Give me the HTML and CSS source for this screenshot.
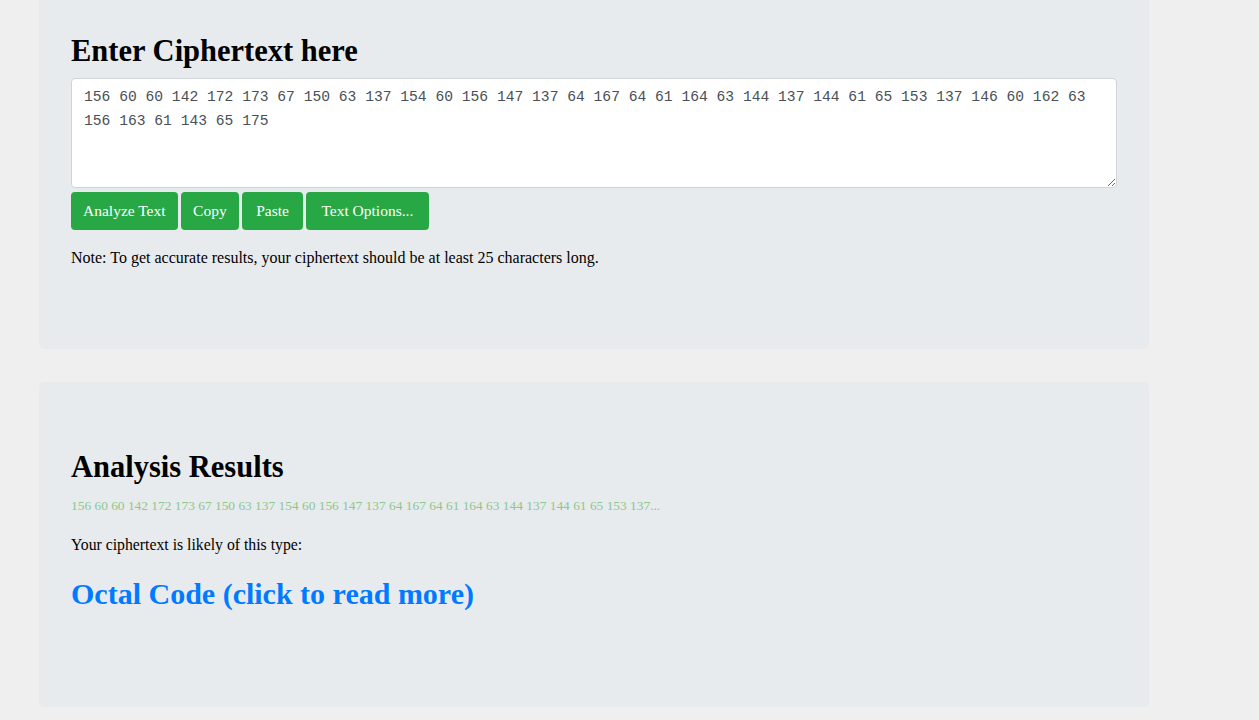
FILE: index.html
```html
<!DOCTYPE html>
<html lang="en">
<head>
<meta charset="utf-8">
<title>Cipher Identifier</title>
<link rel="stylesheet" href="styles.css">
</head>
<body>
<main class="page">
  <section class="card card-input">
    <h2 class="card-title">Enter Ciphertext here</h2>
    <textarea class="cipher-input" spellcheck="false">156 60 60 142 172 173 67 150 63 137 154 60 156 147 137 64 167 64 61 164 63 144 137 144 61 65 153 137 146 60 162 63 156 163 61 143 65 175</textarea>
    <div class="btn-row">
      <button class="btn">Analyze Text</button>
      <button class="btn">Copy</button>
      <button class="btn">Paste</button>
      <button class="btn">Text Options...</button>
    </div>
    <p class="note">Note: To get accurate results, your ciphertext should be at least 25 characters long.</p>
  </section>
  <section class="card card-results">
    <h2 class="card-title">Analysis Results</h2>
    <p class="preview">156 60 60 142 172 173 67 150 63 137 154 60 156 147 137 64 167 64 61 164 63 144 137 144 61 65 153 137...</p>
    <p class="likely">Your ciphertext is likely of this type:</p>
    <a class="result-link" href="#">Octal Code (click to read more)</a>
  </section>
</main>
</body>
</html>
```

FILE: styles.css
```css
html, body {
  margin: 0;
  padding: 0;
  background: #efefef;
}
body {
  font-family: "Liberation Serif", "DejaVu Serif", serif;
  color: #000;
}
.page {
  width: 1110px;
  margin-left: 39px;
  display: flex;
  flex-direction: column;
  gap: 33px;
}
.card {
  background: #e8ebee;
  padding: 0 32px;
  display: flex;
  flex-direction: column;
  align-items: flex-start;
}
.card-input {
  border-radius: 0 0 5px 5px;
  padding-top: 32px;
  height: 349px;
  box-sizing: border-box;
}
.card-results {
  border-radius: 5px;
  padding-top: 66px;
  height: 325px;
  box-sizing: border-box;
}
.card-title {
  margin: 0;
  font-size: 30.5px;
  font-weight: bold;
  line-height: 38px;
}
.cipher-input {
  margin-top: 8px;
  width: 1046px;
  height: 110px;
  box-sizing: border-box;
  border: 1px solid #ced4da;
  border-radius: 4px;
  background: #fff;
  padding: 6px 12px;
  font-family: "Liberation Mono", "DejaVu Sans Mono", monospace;
  font-size: 14.65px;
  line-height: 24px;
  color: #495057;
  resize: vertical;
}
.btn-row {
  display: flex;
  gap: 3px;
  margin-top: 4px;
}
.btn {
  background: #28a745;
  color: #fff;
  border: none;
  border-radius: 4px;
  height: 38px;
  padding: 0 12px;
  font-family: "Liberation Serif", "DejaVu Serif", serif;
  font-size: 15.5px;
}
.btn:nth-child(2) {
  padding: 0 12.5px;
}
.btn:nth-child(3) {
  padding: 0 14px;
}
.btn:nth-child(4) {
  padding: 0 15.5px;
}
.note {
  margin: 17px 0 0;
  font-size: 16px;
  line-height: 22px;
}
.preview {
  margin: 10px 0 0;
  font-size: 13.4px;
  line-height: 20px;
  color: #8cc78c;
}
.likely {
  margin: 18px 0 0;
  font-size: 15.75px;
  line-height: 22px;
}
.result-link {
  margin-top: 19px;
  font-size: 30px;
  font-weight: bold;
  line-height: 38px;
  color: #007bff;
  text-decoration: none;
}
```
